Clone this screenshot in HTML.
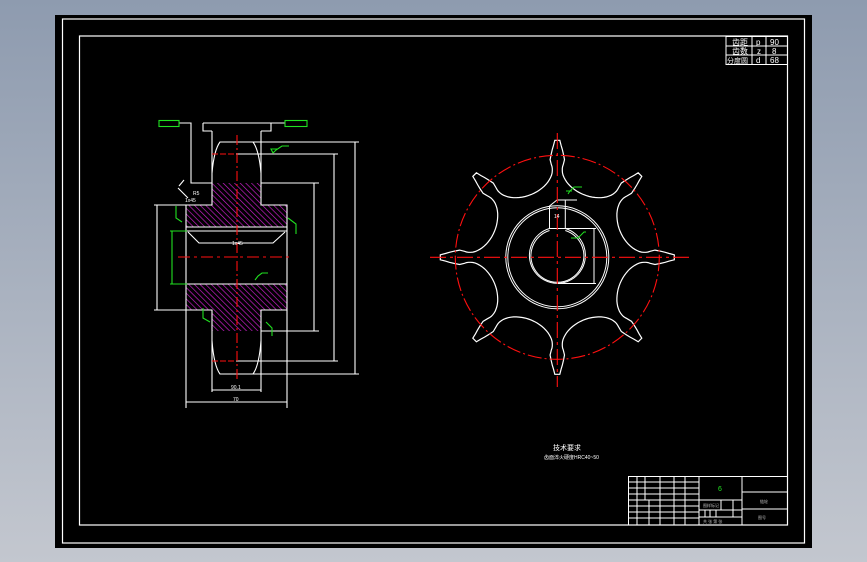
<!DOCTYPE html>
<html><head><meta charset="utf-8">
<style>
html,body{margin:0;padding:0;width:867px;height:562px;overflow:hidden;background:linear-gradient(#8e9baf,#c3c7cf);}
svg{position:absolute;left:0;top:0;}
text{font-family:"Liberation Sans","Noto Sans CJK SC",sans-serif;}
</style></head><body>
<svg width="867" height="562" viewBox="0 0 867 562" xmlns="http://www.w3.org/2000/svg">
<defs>
<pattern id="h" width="4" height="4" patternUnits="userSpaceOnUse" patternTransform="rotate(-45)">
<rect width="4" height="4" fill="#000"/><line x1="0" y1="0" x2="0" y2="4" stroke="#d020d0" stroke-width="1.3"/>
</pattern>
</defs>
<rect x="55" y="15" width="757" height="533" fill="#000"/>
<g fill="none" stroke="#fff" stroke-width="1.2">
<rect x="62.5" y="19" width="742" height="524"/>
<rect x="79.5" y="36" width="708" height="489"/>
</g>
<g fill="none" stroke="#fff" stroke-width="1">
<rect x="726" y="36.5" width="61.5" height="28"/>
<line x1="726" y1="46" x2="787" y2="46"/><line x1="726" y1="55" x2="787" y2="55"/>
<line x1="752" y1="36" x2="752" y2="65"/><line x1="766" y1="36" x2="766" y2="65"/>
</g>
<g fill="#fff" font-size="8">
<text x="732" y="45">齿距</text><text x="756" y="45">p</text><text x="770" y="45">90</text>
<text x="732" y="54">齿数</text><text x="757" y="54">z</text><text x="772" y="54">8</text>
<text x="727" y="63" font-size="7">分度圆</text><text x="756" y="63">d</text><text x="770" y="63">68</text>
</g>
<path d="M212 183H261V205H287V227H186V205H212Z" fill="url(#h)"/>
<path d="M186 284H287V310H261V331H212V310H186Z" fill="url(#h)"/>
<g fill="none" stroke="#fff" stroke-width="1.1">
<path d="M179 123H191V183H212"/><path d="M261 183H319"/>
<path d="M285 123H271V131H261M203 123H271M203 123V131H212"/>
<path d="M212 131V183M261 131V183"/>
<path d="M212 173Q214 150 220 142H359M261 173Q259 150 253 142"/>
<path d="M236 154H338"/>
<path d="M212 183V205H186V310H212V331M261 183V205H287V310H261V331"/>
<path d="M186 227H287M186 231H287M186 284H287M188 232L199 243H273L285 232"/>
<path d="M261 331H319M212 331V392M261 331V392"/>
<path d="M212 341Q214 366 220 374H359M261 341Q259 366 253 374"/>
<path d="M236 361H338"/>
<path d="M186 310V408M287 310V408M186 402H287M212 390H261"/>
<path d="M154 205H186M154 310H186M157 205V310"/>
<path d="M314 183V331M334 154V361M355 142V374"/>
<path d="M178 188L188 198M184 180L179 186"/>
</g>
<g fill="none" stroke="#ff1010" stroke-width="1.1">
<line x1="237" y1="135" x2="237" y2="382" stroke-dasharray="10 3 2 3"/>
<line x1="178" y1="257" x2="292" y2="257" stroke-dasharray="12 4 3 4"/>
<line x1="212" y1="154" x2="236" y2="154" stroke-dasharray="6 2"/>
<line x1="212" y1="361" x2="236" y2="361" stroke-dasharray="6 2"/>
</g>
<g fill="none" stroke="#20e020" stroke-width="1.1">
<rect x="159" y="120.5" width="20" height="6"/><rect x="285" y="120.5" width="22" height="6"/>
<path d="M172 231V284M170 231H187M170 284H187"/>
<path d="M273 153L276 150L282 146H289M273 153L271 149H277"/>
<path d="M255 280L258 276L262 273H268"/>
<path d="M176 206V218L182 222M203 308V318L210 322M288 218L296 224V234M266 322L272 328V336"/>
</g>
<g fill="#fff" font-size="5">
<text x="232" y="245">1x45</text><text x="231" y="389">90.1</text><text x="233" y="401">70</text>
<text x="193" y="195">R5</text><text x="185" y="202">1x45</text>
</g>
<path id="sp" fill="none" stroke="#fff" stroke-width="1.2"/>
<circle cx="557.3" cy="257.3" r="102" fill="none" stroke="#ff1010" stroke-width="1.1" stroke-dasharray="14 3 2 3"/>
<g fill="none" stroke="#fff" stroke-width="1">
<circle cx="557.3" cy="257.3" r="51.5"/><circle cx="557.3" cy="257.3" r="49.5"/>
<path d="M549.5 228.5A28 28 0 1 0 565.3 228.5"/><path d="M549.5 230.5A26.5 26.5 0 1 0 565.3 230.5"/>
<path d="M549.5 228.5V206L557 200H565.3V228.5M549.5 228.5H596M561 200H577M557 283.5H596M594 228.5V283.5"/>
</g>
<g fill="none" stroke="#ff1010" stroke-width="1.1">
<line x1="557.3" y1="133" x2="557.3" y2="387" stroke-dasharray="16 4 3 4"/>
<line x1="430" y1="257.3" x2="690" y2="257.3" stroke-dasharray="16 4 3 4"/>
</g>
<g fill="none" stroke="#20e020" stroke-width="1">
<path d="M568 194L570 191L574 187H582M566 191H572"/>
<path d="M571 238L578 238L584 232H586M584 232L581 235"/>
</g>
<text x="554" y="218" fill="#fff" font-size="5">14</text>
<text x="553" y="450" fill="#fff" font-size="7">技术要求</text>
<text x="544" y="459" fill="#fff" font-size="5">齿面淬火硬度HRC40~50</text>
<g fill="none" stroke="#fff" stroke-width="1">
<rect x="628.5" y="476.5" width="159" height="48.5"/>
<line x1="699" y1="476" x2="699" y2="525"/><line x1="742" y1="476" x2="742" y2="525"/>
<line x1="742" y1="492" x2="787" y2="492"/><line x1="742" y1="509" x2="787" y2="509"/>
<line x1="699" y1="500" x2="742" y2="500"/><line x1="699" y1="510" x2="742" y2="510"/><line x1="699" y1="517" x2="742" y2="517"/>
<line x1="629" y1="482" x2="699" y2="482"/><line x1="629" y1="488" x2="699" y2="488"/><line x1="629" y1="494" x2="699" y2="494"/>
<line x1="629" y1="500" x2="699" y2="500"/><line x1="629" y1="506" x2="699" y2="506"/><line x1="629" y1="512" x2="699" y2="512"/><line x1="629" y1="518" x2="699" y2="518"/>
<line x1="637" y1="476" x2="637" y2="525"/><line x1="645" y1="476" x2="645" y2="500"/><line x1="649" y1="500" x2="649" y2="525"/>
<line x1="660" y1="476" x2="660" y2="525"/><line x1="674" y1="476" x2="674" y2="525"/><line x1="685" y1="476" x2="685" y2="525"/>
<line x1="721" y1="500" x2="721" y2="510"/><line x1="733" y1="500" x2="733" y2="517"/>
<line x1="705" y1="510" x2="705" y2="517"/><line x1="710" y1="510" x2="710" y2="517"/><line x1="716" y1="510" x2="716" y2="517"/>
</g>
<text x="718" y="491" fill="#20e020" font-size="7">6</text>
<g fill="#bbb" font-size="4"><text x="760" y="503">链轮</text><text x="758" y="519">图号</text><text x="703" y="507">图样标记</text><text x="703" y="523">共 张 第 张</text></g>
</svg>
<script>
(function(){
var cx=557.3,cy=257.3,d="",D=Math.PI/180;
function g(x,y,a){var c=Math.cos(a),s=Math.sin(a);return [cx+x*c-y*s,cy+x*s+y*c];}
function f(p){return p[0].toFixed(1)+" "+p[1].toFixed(1);}
var ra=20,rb=30,C=88;
var fl=[[98,7.2],[103,6.2],[108,5],[112,3.8],[117,2.5]];
function flank(sign){
  var pts=[];
  for(var i=0;i<fl.length;i++){var r=fl[i][0],a=(22.5-fl[i][1]/r/D)*D;pts.push([r*Math.cos(a),sign*r*Math.sin(a)]);}
  return pts;
}
for(var k=0;k<8;k++){
 var ga=(-90+45*k+22.5)*D;
 var left=flank(-1).reverse();
 for(var i=0;i<left.length;i++){d+=(k==0&&i==0?"M":" L")+f(g(left[i][0],left[i][1],ga));}
 for(var j=0;j<=30;j++){var t=-Math.PI/2-Math.PI*j/30;d+=" L"+f(g(C+ra*Math.cos(t),rb*Math.sin(t),ga));}
 var right=flank(1);
 for(var m=0;m<right.length;m++){d+=" L"+f(g(right[m][0],right[m][1],ga));}
}
d+="Z";
document.getElementById("sp").setAttribute("d",d);
})();
</script>
</body></html>
